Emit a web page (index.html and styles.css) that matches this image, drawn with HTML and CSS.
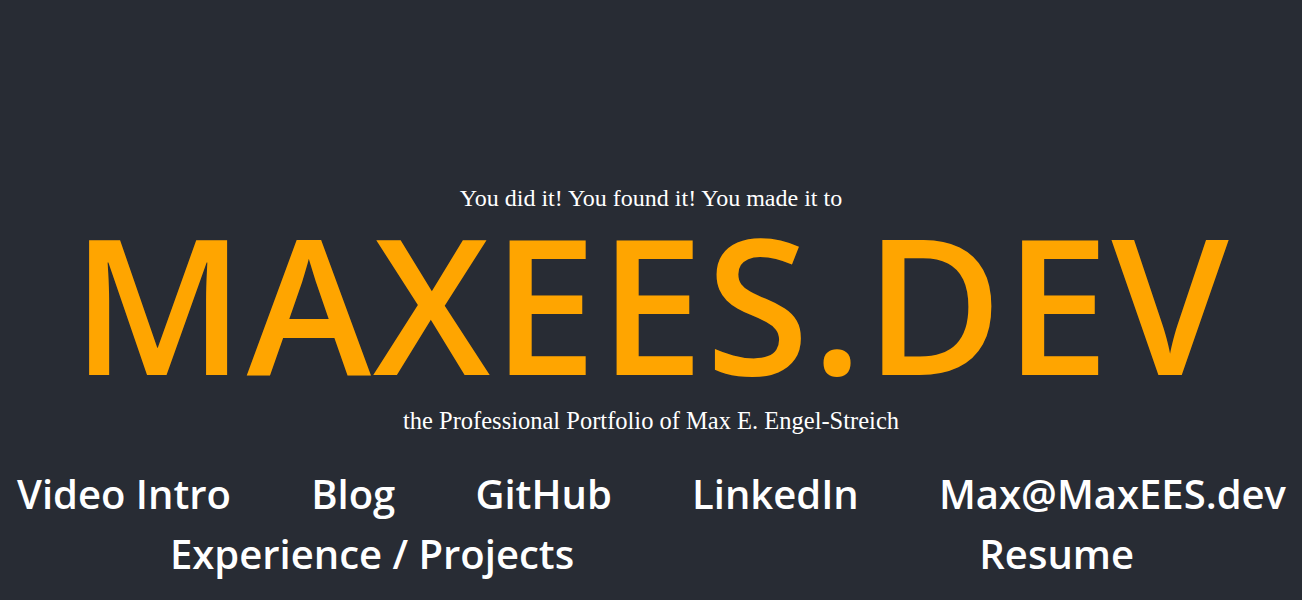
FILE: index.html
```html
<!DOCTYPE html>
<html lang="en">
<head>
<meta charset="utf-8">
<title>MaxEES.dev</title>
<link rel="stylesheet" href="styles.css">
</head>
<body>
<main class="hero">
  <p class="kicker">You did it! You found it! You made it to</p>
  <h1 class="title">MAXEES.DEV</h1>
  <p class="tagline">the Professional Portfolio of Max E. Engel-Streich</p>
  <nav class="links">
    <div class="row row-main">
      <a class="link" href="#">Video Intro</a>
      <a class="link" href="#">Blog</a>
      <a class="link" href="#">GitHub</a>
      <a class="link" href="#">LinkedIn</a>
      <a class="link" href="#">Max@MaxEES.dev</a>
    </div>
    <div class="row row-sub">
      <a class="link" href="#">Experience / Projects</a>
      <a class="link" href="#">Resume</a>
    </div>
  </nav>
</main>
</body>
</html>
```
FILE: styles.css
```css
html, body {
  margin: 0;
  background: #282c34;
  color: #ffffff;
}
.hero {
  display: flex;
  flex-direction: column;
  align-items: center;
  padding-top: 183px;
}
.kicker, .tagline {
  margin: 0;
  font-family: "Liberation Serif", "DejaVu Serif", serif;
  font-size: 24px;
  line-height: 30px;
}
.title {
  margin: 5px 0 0;
  font-family: "Open Sans", sans-serif;
  font-weight: 600;
  font-size: 188px;
  line-height: 168px;
  color: #ffa500;
  letter-spacing: 2px;
}
.tagline {
  margin-top: 20px;
  font-size: 24.5px;
}
.links {
  align-self: stretch;
  margin-top: 28px;
  font-family: "Open Sans", sans-serif;
  font-weight: 600;
  font-size: 40px;
  line-height: 60px;
}
.row {
  display: flex;
}
.row-main {
  justify-content: space-between;
  padding: 0 16px 0 17px;
}
.row-sub {
  justify-content: space-between;
  padding: 0 168px 0 170px;
}
.link {
  color: #ffffff;
  text-decoration: none;
}
```
